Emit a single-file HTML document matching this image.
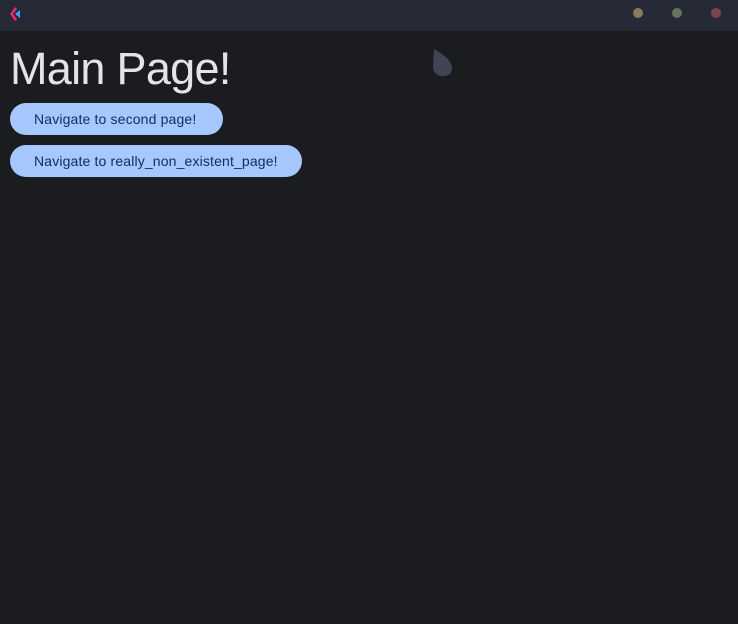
<!DOCTYPE html>
<html><head><style>
body{margin:0;width:738px;height:624px;background:#1b1c1f;font-family:"Liberation Sans",sans-serif;position:relative;overflow:hidden}
.bar{position:absolute;left:0;top:0;width:738px;height:31px;background:#262a37}
.dot{position:absolute;top:8px;width:10px;height:10px;border-radius:50%}
h1{position:absolute;left:10px;top:43px;margin:0;font-size:45px;font-weight:300;color:#e4e4e8;letter-spacing:-0.7px}
.btn{position:absolute;left:10px;height:32px;border-radius:16px;background:#a7c8ff;color:#0d2d5a;font-size:14px;line-height:33px;padding-left:24px;box-sizing:border-box;letter-spacing:0.15px}
</style></head><body>
<div class="bar">
<svg style="position:absolute;left:9px;top:7px" width="14" height="14" viewBox="0 0 14 14"><path d="M6 0 L1 7 L6 14 L8 12 L4 7 L8 2 Z" fill="#f0246a"/><path d="M6 7 L11 3 L11 11 Z" fill="#3aa6e8"/></svg>
<div class="dot" style="left:633px;background:#8c7a5e"></div>
<div class="dot" style="left:672px;background:#66745f"></div>
<div class="dot" style="left:711px;background:#7c4452"></div>
</div>
<svg style="position:absolute;left:432px;top:49px" width="21" height="28" viewBox="0 0 21 28"><path d="M2 0 Q20 10 20 19 Q20 27 11 27 Q2 27 1 18 Z" fill="#3f4555"/></svg>
<h1>Main Page!</h1>
<div class="btn" style="top:103px;width:213px">Navigate to second page!</div>
<div class="btn" style="top:145px;width:292px">Navigate to really_non_existent_page!</div>
</body></html>
